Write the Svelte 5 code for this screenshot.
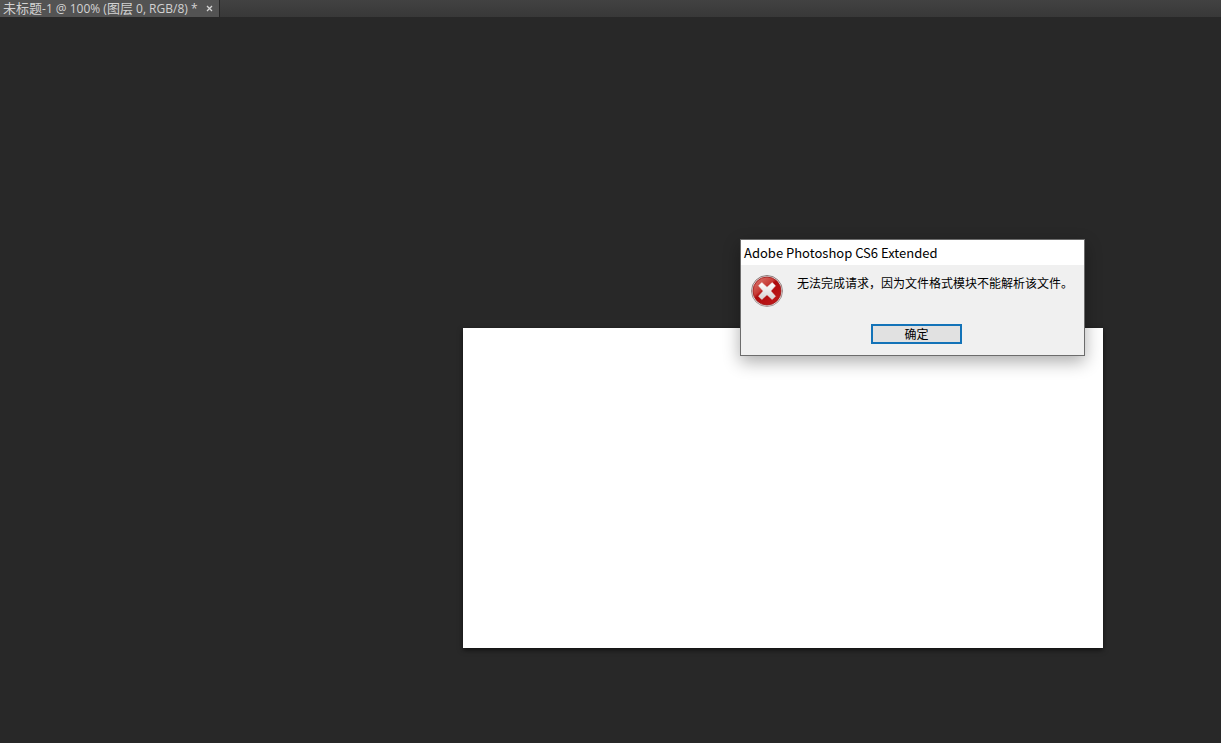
<script>
  let dialogOpen = $state(true);
</script>

<div class="editor">
  <header class="tabs">
    <div class="tab">
      <span class="name"><span class="han">未标题</span>-1 @ 100% (<span class="han">图层</span> 0, RGB/8) *</span>
      <button class="close" aria-label="关闭">
        <svg viewBox="0 0 7 7" width="7" height="7"><path d="M1 1L6 6M6 1L1 6" stroke="#d4d4d4" stroke-width="1.3" /></svg>
      </button>
    </div>
  </header>

  <main class="workspace">
    <div class="artboard"></div>

    {#if dialogOpen}
      <div class="dialog" role="alertdialog" aria-labelledby="dialog-title" aria-describedby="dialog-message">
        <h1 id="dialog-title">Adobe Photoshop CS6 Extended</h1>
        <div class="body">
          <div class="notice">
            <svg class="icon" viewBox="0 0 32 32" width="32" height="32" aria-hidden="true">
              <defs>
                <linearGradient id="rim" x1="0" y1="0" x2="0" y2="1">
                  <stop offset="0" stop-color="#8c7a7a" />
                  <stop offset="1" stop-color="#a99a9a" />
                </linearGradient>
                <linearGradient id="red" x1="0" y1="0" x2="0.8" y2="1">
                  <stop offset="0" stop-color="#dc8078" />
                  <stop offset="0.42" stop-color="#c83c36" />
                  <stop offset="0.5" stop-color="#ae0a0c" />
                  <stop offset="1" stop-color="#c01a1c" />
                </linearGradient>
                <linearGradient id="cross" x1="0" y1="0" x2="0" y2="1">
                  <stop offset="0" stop-color="#ffffff" />
                  <stop offset="1" stop-color="#d6d2d2" />
                </linearGradient>
              </defs>
              <circle cx="16" cy="16" r="15.5" fill="#e6dfdf" stroke="url(#rim)" />
              <circle cx="16" cy="16" r="14" fill="url(#red)" stroke="#a01818" stroke-width="0.8" />
              <path d="M7.5 10.8L10.8 7.5L16 12.2L21.2 7.5L24.5 10.8L19.8 16L24.5 21.2L21.2 24.5L16 19.8L10.8 24.5L7.5 21.2L12.2 16Z" fill="url(#cross)" stroke="#f2eeee" stroke-width="0.5" stroke-linejoin="round" />
            </svg>
            <p id="dialog-message">无法完成请求，因为文件格式模块不能解析该文件。</p>
          </div>
          <button class="confirm" onclick={() => (dialogOpen = false)}>确定</button>
        </div>
      </div>
    {/if}
  </main>
</div>

<style>
  :global(body) {
    margin: 0;
    background: #282828;
  }

  .editor {
    display: flex;
    flex-direction: column;
    min-height: 100vh;
    background: #282828;
  }

  .tabs {
    display: flex;
    height: 17px;
    background: linear-gradient(#424242, #383838);
  }

  .tab {
    display: flex;
    align-items: center;
    gap: 8px;
    padding: 0 6px 0 3px;
    background: #535353;
    border-right: 1px solid #272727;
    color: #d2d2d2;
    font: 12px/17px "Open Sans", "Noto Sans CJK SC", sans-serif;
    white-space: nowrap;
  }

  .han {
    font-size: 13px;
  }

  .close {
    display: flex;
    padding: 0;
    border: 0;
    background: none;
  }

  .workspace {
    position: relative;
    flex: 1;
    overflow: hidden;
  }

  .artboard {
    position: absolute;
    left: 463px;
    top: 311px;
    width: 640px;
    height: 320px;
    background: #fff;
    box-shadow: 0 2px 5px rgba(0, 0, 0, 0.6);
  }

  .dialog {
    position: absolute;
    left: 740px;
    top: 222px;
    width: 343px;
    border: 1px solid #6c6c6c;
    background: #f0f0f0;
    box-shadow: 0 6px 16px rgba(0, 0, 0, 0.32);
    color: #000;
  }

  h1 {
    margin: 0;
    padding: 0 3px;
    background: #fff;
    font: 400 13px/25px "Noto Sans CJK SC", sans-serif;
  }

  .body {
    display: flex;
    flex-direction: column;
    padding: 10px 10px 11px;
    gap: 17px;
  }

  .notice {
    display: flex;
    gap: 14px;
  }

  .icon {
    flex: none;
  }

  p {
    margin: 0;
    font: 12px/16px "Noto Sans CJK SC", sans-serif;
    white-space: nowrap;
  }

  .confirm {
    align-self: center;
    width: 91px;
    height: 20px;
    margin-left: 8px;
    padding: 0;
    border: 2px solid #1373b8;
    background: #e1e1e1;
    color: #000;
    font: 12px/16px "Noto Sans CJK SC", sans-serif;
  }
</style>
